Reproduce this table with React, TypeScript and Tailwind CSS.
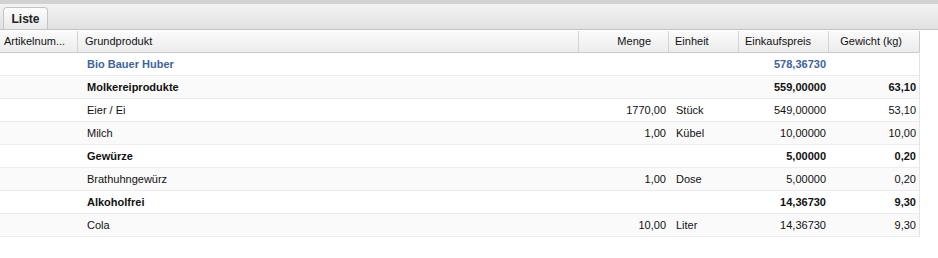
const cols = "grid grid-cols-[78px_501px_90px_70px_90px_91px]";

type Row = {
  name: string;
  menge?: string;
  einheit?: string;
  preis: string;
  gewicht?: string;
  kind: "root" | "group" | "item";
};

const rows: Row[] = [
  { name: "Bio Bauer Huber", preis: "578,36730", kind: "root" },
  { name: "Molkereiprodukte", preis: "559,00000", gewicht: "63,10", kind: "group" },
  { name: "Eier / Ei", menge: "1770,00", einheit: "Stück", preis: "549,00000", gewicht: "53,10", kind: "item" },
  { name: "Milch", menge: "1,00", einheit: "Kübel", preis: "10,00000", gewicht: "10,00", kind: "item" },
  { name: "Gewürze", preis: "5,00000", gewicht: "0,20", kind: "group" },
  { name: "Brathuhngewürz", menge: "1,00", einheit: "Dose", preis: "5,00000", gewicht: "0,20", kind: "item" },
  { name: "Alkoholfrei", preis: "14,36730", gewicht: "9,30", kind: "group" },
  { name: "Cola", menge: "10,00", einheit: "Liter", preis: "14,36730", gewicht: "9,30", kind: "item" },
];

export default function App() {
  return (
    <div className="w-[938px] h-[258px] bg-white text-[11px] text-black font-['Liberation_Sans',Arial,sans-serif] overflow-hidden">
      {/* Tab bar */}
      <div className="h-[4px] bg-[#d2d2d2]" />
      <div className="h-[26px] flex items-end pl-[3px] bg-gradient-to-b from-[#f3f3f3] to-[#e1e1e1] border-b border-[#c4c4c4]">
        <div className="h-[22px] w-[45px] flex items-center justify-center rounded-t-[4px] border border-b-0 border-[#c4c4c4] bg-gradient-to-b from-[#fdfdfd] to-[#e9e9e9] font-bold text-[12px] text-[#222]">
          Liste
        </div>
      </div>

      {/* Grid */}
      <div className="w-[920px] mt-[1px] border-r border-[#e4e4e4]">
        <div className={`${cols} h-[22px] bg-gradient-to-b from-[#fbfbfb] to-[#ececec] border-b border-[#c9c9c9] text-[#111]`}>
          <div className="flex items-center pl-[4px] border-r border-[#d4d4d4]">Artikelnum...</div>
          <div className="flex items-center pl-[7px] border-r border-[#d4d4d4]">Grundprodukt</div>
          <div className="flex items-center justify-end pr-[17px] border-r border-[#d4d4d4]">Menge</div>
          <div className="flex items-center pl-[6px] border-r border-[#d4d4d4]">Einheit</div>
          <div className="flex items-center justify-end pr-[17px] border-r border-[#d4d4d4]">Einkaufspreis</div>
          <div className="flex items-center justify-end pr-[17px] border-r border-[#c9c9c9]">Gewicht (kg)</div>
        </div>

        {rows.map((r, i) => {
          const bold = r.kind !== "item";
          const tone = r.kind === "root" ? "text-[#3d63a3] font-bold" : bold ? "font-bold text-[#111]" : "text-[#111]";
          return (
            <div
              key={i}
              className={`${cols} h-[23px] border-b border-[#ececec] ${i % 2 === 1 ? "bg-[#fafafa]" : "bg-white"} ${tone}`}
            >
              <div />
              <div className="flex items-center pl-[9px]">{r.name}</div>
              <div className="flex items-center justify-end pr-[3px]">{r.menge}</div>
              <div className="flex items-center pl-[7px]">{r.einheit}</div>
              <div className="flex items-center justify-end pr-[3px]">{r.preis}</div>
              <div className="flex items-center justify-end pr-[4px]">{r.gewicht}</div>
            </div>
          );
        })}
      </div>
    </div>
  );
}
